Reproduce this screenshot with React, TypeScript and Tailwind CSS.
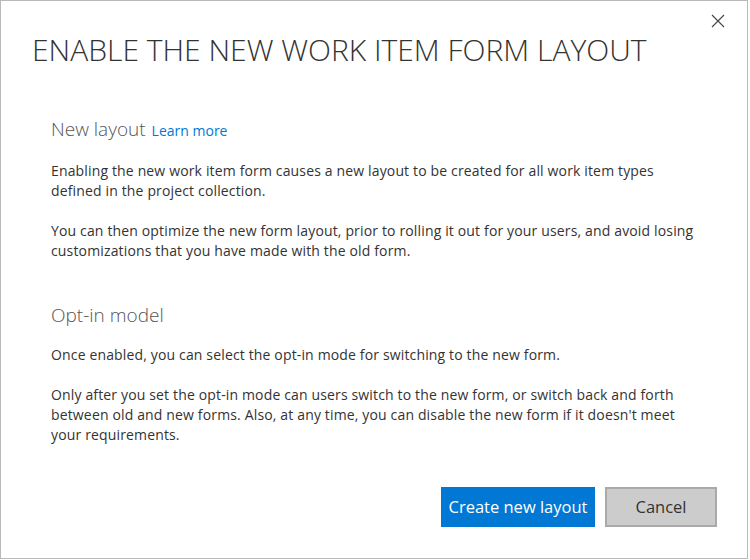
import React from 'react';

const font = { fontFamily: '"Open Sans", "Noto Sans", sans-serif' };

export default function App() {
  return (
    <div className="w-[750px] h-[560px] bg-white" style={font}>
      <div className="relative flex flex-col w-[748px] h-[559px] border border-[#b9b9b9] bg-white">
        <button className="absolute right-[22px] top-[13px] text-[#444]" aria-label="Close">
          <svg width="14" height="14" viewBox="0 0 14 14" fill="none" stroke="currentColor" strokeWidth="1.1">
            <path d="M1 1 L13 13 M13 1 L1 13" />
          </svg>
        </button>

        <h1 className="pl-[31px] pt-[29px] text-[30px] leading-[40px] font-light text-[#333]">
          ENABLE THE NEW WORK ITEM FORM LAYOUT
        </h1>

        <div className="flex flex-col pl-[50px] pr-[50px] pt-[45px] text-[14px] leading-[20px] tracking-[0.15px] text-[#333]">
          <div className="flex items-baseline gap-[6px] text-[19px] font-light text-[#555] leading-[28px] tracking-normal">
            New layout
            <a className="text-[14px] font-normal text-[#0078d4]">Learn more</a>
          </div>
          <p className="mt-[16px]">
            Enabling the new work item form causes a new layout to be created for all work item types defined in the project collection.
          </p>
          <p className="mt-[20px]">
            You can then optimize the new form layout, prior to rolling it out for your users, and avoid losing customizations that you have made with the old form.
          </p>

          <div className="mt-[40px] text-[19px] font-light text-[#555] leading-[28px] tracking-normal">Opt-in model</div>
          <p className="mt-[16px]">
            Once enabled, you can select the opt-in mode for switching to the new form.
          </p>
          <p className="mt-[20px]">
            Only after you set the opt-in mode can users switch to the new form, or switch back and forth between old and new forms. Also, at any time, you can disable the new form if it doesn't meet your requirements.
          </p>
        </div>

        <div className="mt-auto flex justify-end gap-[10px] pr-[30px] pb-[31px]">
          <button className="h-[40px] w-[154px] bg-[#0078d4] text-white text-[16.5px]">Create new layout</button>
          <button className="h-[40px] w-[112px] bg-[#cccccc] border-2 border-[#aaaaaa] text-[#333] text-[16.5px]">Cancel</button>
        </div>
      </div>
    </div>
  );
}
